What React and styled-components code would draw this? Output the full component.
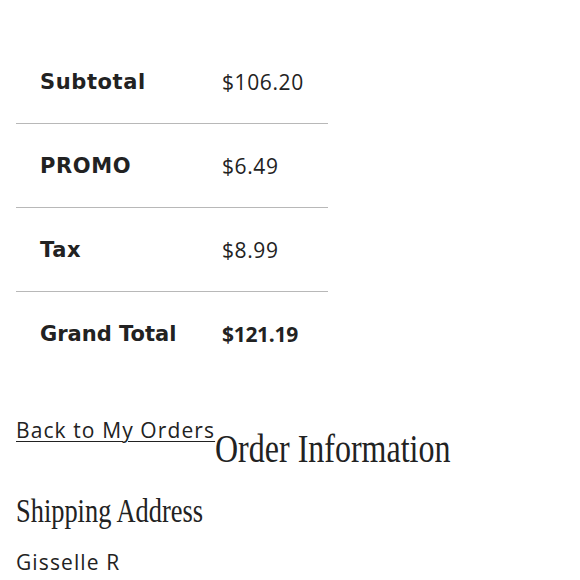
import styled, { createGlobalStyle } from "styled-components";

const Global = createGlobalStyle`
  body {
    margin: 0;
    background: #fff;
    color: #222;
    font-family: "Open Sans", "Liberation Sans", sans-serif;
  }
`;

const rows = [
  { label: "Subtotal", value: "$106.20" },
  { label: "PROMO", value: "$6.49" },
  { label: "Tax", value: "$8.99" },
  { label: "Grand Total", value: "$121.19", total: true },
];

const App = () => {
  return (
    <Page>
      <Global />
      <Summary>
        {rows.map((r) => (
          <Row key={r.label}>
            <Label $total={r.total}>{r.label}</Label>
            <Value $total={r.total}>{r.value}</Value>
          </Row>
        ))}
      </Summary>
      <Header>
        <BackLink href="#">Back to My Orders</BackLink>
        <Title>Order Information</Title>
      </Header>
      <SubTitle>Shipping Address</SubTitle>
      <Address>Gisselle R</Address>
    </Page>
  );
};

const Page = styled.div`
  padding: 40px 16px 0;
`;

const Summary = styled.div`
  width: 312px;
`;

const Row = styled.div`
  display: grid;
  grid-template-columns: 206px 1fr;
  align-items: center;
  height: 84px;
  padding-left: 24px;
  box-sizing: border-box;
  border-bottom: 1px solid #b8b8b8;
  &:last-child {
    border-bottom: none;
  }
`;

const Label = styled.div`
  font-family: "DejaVu Sans", sans-serif;
  font-size: 21px;
  font-weight: 700;
  letter-spacing: ${(p) => (p.$total ? "0" : "0.6px")};
  color: #222;
`;

const Value = styled.div`
  font-size: 21px;
  font-weight: ${(p) => (p.$total ? 700 : 400)};
  letter-spacing: ${(p) => (p.$total ? "-0.3px" : "0.6px")};
  margin-left: -24px;
  color: #222;
`;

const Header = styled.div`
  display: flex;
  align-items: flex-start;
  margin-top: 40px;
`;

const BackLink = styled.a`
  font-size: 21px;
  letter-spacing: 1.1px;
  color: #222;
  text-decoration: underline;
  text-decoration-thickness: 1px;
  text-underline-offset: 3px;
  line-height: 28px;
  white-space: nowrap;
`;

const Title = styled.h1`
  margin: 11px 0 0;
  font-family: "Liberation Serif", serif;
  font-weight: 400;
  font-size: 40px;
  line-height: 44px;
  color: #222;
  white-space: nowrap;
  transform: scaleX(0.8);
  transform-origin: left center;
`;

const SubTitle = styled.h2`
  margin: 21px 0 0;
  font-family: "Liberation Serif", serif;
  font-weight: 400;
  font-size: 33px;
  line-height: 38px;
  color: #222;
  white-space: nowrap;
  transform: scaleX(0.8);
  transform-origin: left center;
`;

const Address = styled.p`
  margin: 18px 0 0;
  font-size: 21px;
  letter-spacing: 1.1px;
  color: #222;
`;

export default App;
